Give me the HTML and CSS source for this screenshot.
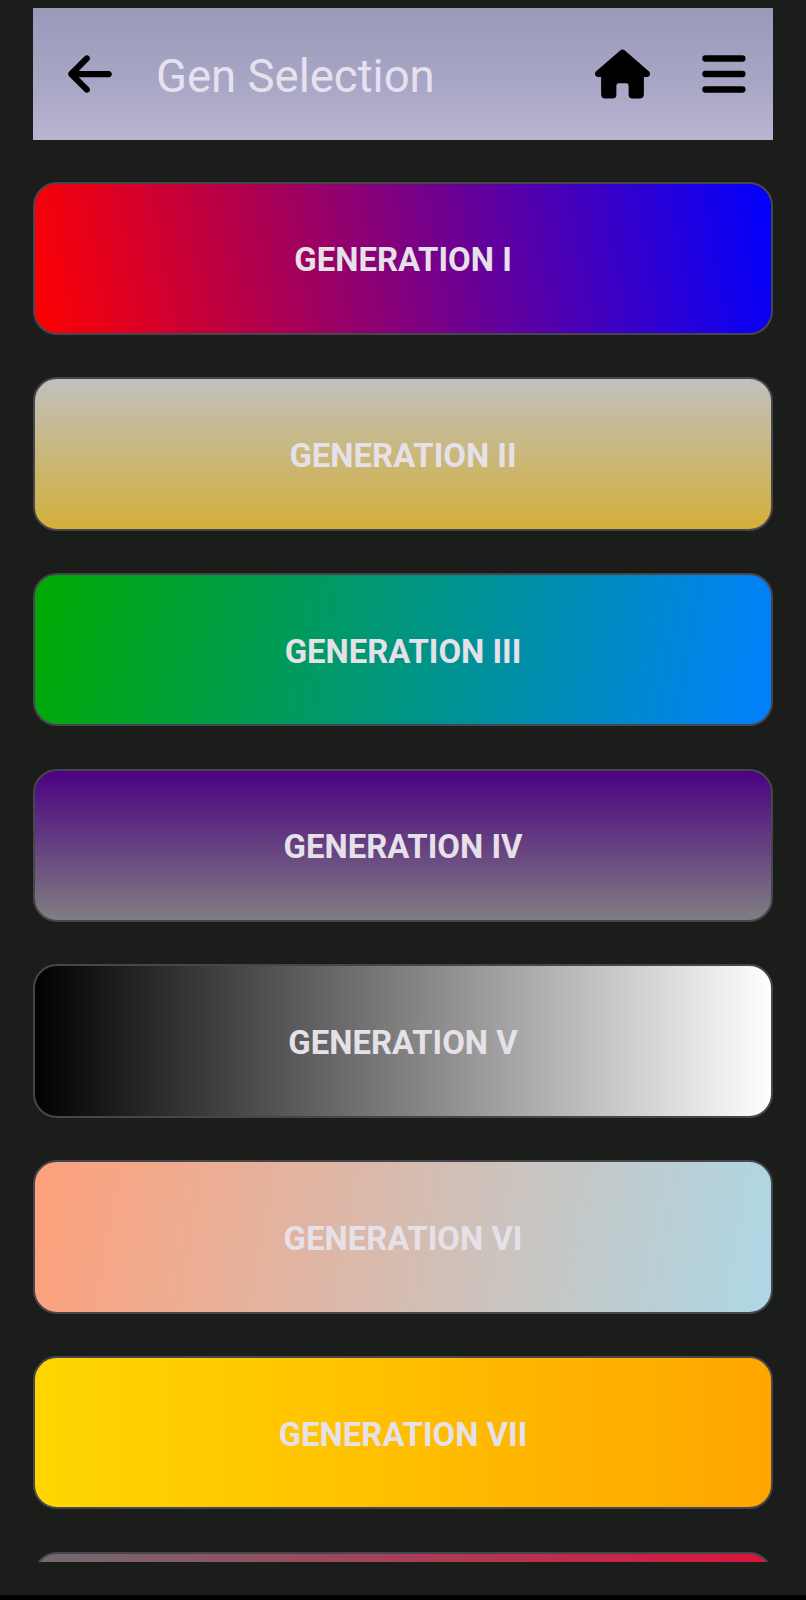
FILE: index.html
```html
<!DOCTYPE html>
<html lang="en">
<head>
<meta charset="utf-8">
<title>Gen Selection</title>
<link rel="stylesheet" href="styles.css">
</head>
<body>
<div class="screen">
  <header class="bar">
    <svg class="back" viewBox="0 0 448 512"><path d="M9.400 233.400c-12.500 12.500-12.500 32.800 0 45.300l160 160c12.500 12.500 32.800 12.500 45.300 0s12.500-32.800 0-45.300L109.200 288 416 288c17.700 0 32-14.300 32-32s-14.300-32-32-32l-306.700 0L214.600 118.600c12.500-12.500 12.500-32.800 0-45.300s-32.800-12.500-45.300 0l-160 160z"/></svg>
    <h1 class="title">Gen Selection</h1>
    <svg class="home" viewBox="0 0 576 512"><path d="M266 8Q288-9 310 8L566 231Q581 247 574 267Q565 288 544 288H512V468Q512 512 468 512H392Q352 512 352 472V376Q352 352 328 352H248Q224 352 224 376V472Q224 512 184 512H108Q64 512 64 468V288H32Q11 288 2 267Q-5 247 10 231Z"/></svg>
    <svg class="menu" viewBox="0 0 44 40"><path d="M3.400 4.500H40.400M3.400 20H40.400M3.400 35.500H40.400"/></svg>
  </header>
  <main class="list">
    <button class="card gen1">GENERATION I</button>
    <button class="card gen2">GENERATION II</button>
    <button class="card gen3">GENERATION III</button>
    <button class="card gen4">GENERATION IV</button>
    <button class="card gen5">GENERATION V</button>
    <button class="card gen6">GENERATION VI</button>
    <button class="card gen7">GENERATION VII</button>
    <button class="card gen8"></button>
  </main>
  <div class="edge"></div>
</div>
</body>
</html>
```
FILE: styles.css
```css
* { box-sizing: border-box; }
body { margin: 0; background: #1b1d1a; font-family: Roboto, sans-serif; }
.screen { height: 1600px; padding: 8px 33px 0; display: flex; flex-direction: column; overflow: hidden; }
.bar { height: 132px; flex: none; display: flex; align-items: flex-start; padding: 0 27px 0 35px; background: linear-gradient(#9a99b9, #a9a7c6 60%, #b8b6cf); }
.back { width: 44px; height: 50px; margin-top: 41px; flex: none; }
.title { margin: 42px auto 0 44px; font-size: 45.500px; line-height: 54px; font-weight: 400; color: #e6e1ee; white-space: nowrap; }
.home { width: 55px; height: 50px; margin: 41px 52px 0 0; flex: none; }
.menu { width: 44px; height: 40px; margin-top: 46px; flex: none; }
.menu path { stroke: #000; stroke-width: 6.300; stroke-linecap: round; }
.list { flex: none; height: 1422px; padding-top: 41.700px; display: flex; flex-direction: column; gap: 42.300px; overflow: hidden; }
.card { flex: none; height: 153.400px; padding: 4px 0 0; border: 2px solid #49454f; border-radius: 24px; background-origin: border-box; font: 700 32.900px/40px Roboto, sans-serif; color: #e6e1e9; }
.gen1 { background-image: linear-gradient(80deg, #f00, #00f); }
.gen2 { background-image: linear-gradient(#c0c0c0, #d4af37); }
.gen3 { background-image: linear-gradient(100deg, #0a0, #0080ff); }
.gen4 { background-image: linear-gradient(#4b0082, #808080); }
.gen5 { background-image: linear-gradient(90deg, #000, #fff); }
.gen6 { background-image: linear-gradient(100deg, #ffa07a, #add8e6); }
.gen7 { background-image: linear-gradient(90deg, #ffd700, #ffa500); }
.gen8 { background-image: linear-gradient(90deg, #706b70, #dc143c); }
.edge { flex: none; height: 5px; margin: 33px -33px 0; background: #000; }
```
